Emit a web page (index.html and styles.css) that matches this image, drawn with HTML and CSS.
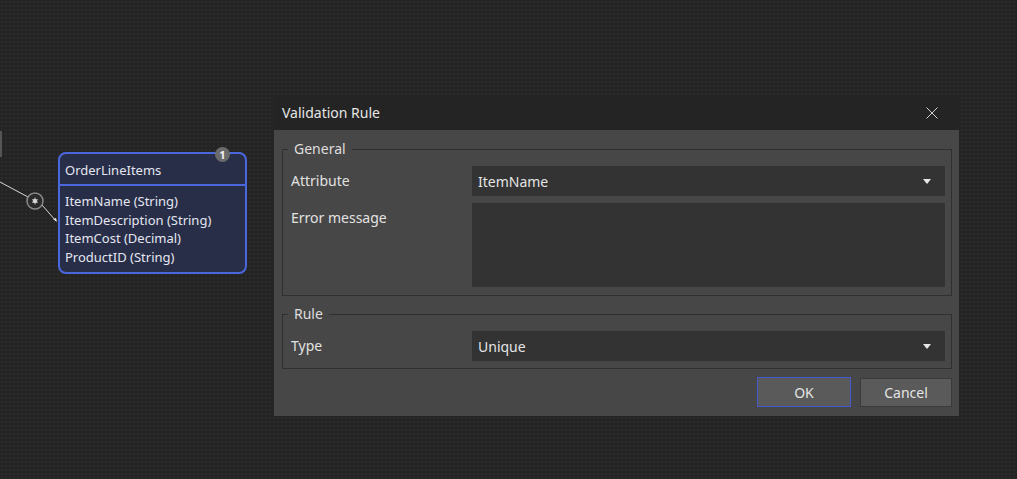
FILE: index.html
```html
<!DOCTYPE html>
<html>
<head>
<meta charset="utf-8">
<link rel="stylesheet" href="styles.css">
</head>
<body>
<div class="canvas">
  <div class="edge-mark"></div>
  <svg class="connector" width="60" height="100" viewBox="0 0 60 100">
    <line x1="0" y1="52" x2="28" y2="67" stroke="#d8d8d8" stroke-width="1"/>
    <line x1="42" y1="75" x2="56" y2="91" stroke="#d8d8d8" stroke-width="1"/>
    <circle cx="35" cy="71" r="8" fill="#2a2a2a" stroke="#8a8a8a" stroke-width="1.5"/>
    <circle cx="35" cy="71" r="2.2" fill="#e0e0e0"/>
    <path d="M35 67.5v7M32 69.5l6 3M38 69.5l-6 3" stroke="#cfcfcf" stroke-width="0.8"/>
    <path d="M53 89l4 3l-1 -4z" fill="#e0e0e0"/>
  </svg>

  <div class="entity">
    <div class="entity-badge">1</div>
    <div class="entity-head">OrderLineItems</div>
    <ul class="entity-attrs">
      <li>ItemName (String)</li>
      <li>ItemDescription (String)</li>
      <li>ItemCost (Decimal)</li>
      <li>ProductID (String)</li>
    </ul>
  </div>

  <div class="dialog">
    <div class="titlebar">
      <span class="title">Validation Rule</span>
      <svg class="close" width="12" height="12" viewBox="0 0 12 12">
        <path d="M0.5 0.5L11.5 11.5M11.5 0.5L0.5 11.5" stroke="#cfcfcf" stroke-width="1"/>
      </svg>
    </div>
    <div class="dialog-body">
      <fieldset class="group">
        <legend class="legend">General</legend>
        <div class="row">
          <span class="label">Attribute</span>
          <div class="combo"><span>ItemName</span><span class="arrow"></span></div>
        </div>
        <div class="row">
          <span class="label">Error message</span>
          <div class="textarea"></div>
        </div>
      </fieldset>
      <fieldset class="group group-rule">
        <legend class="legend">Rule</legend>
        <div class="row">
          <span class="label">Type</span>
          <div class="combo"><span>Unique</span><span class="arrow"></span></div>
        </div>
      </fieldset>
      <div class="buttons">
        <div class="btn btn-ok">OK</div>
        <div class="btn btn-cancel">Cancel</div>
      </div>
    </div>
  </div>
</div>
</body>
</html>
```
FILE: styles.css
```css
* { box-sizing: border-box; }
html, body {
  margin: 0;
  padding: 0;
  width: 1017px;
  height: 479px;
  overflow: hidden;
}
body {
  background: #242424;
  font-family: "Noto Sans", "DejaVu Sans", sans-serif;
  color: #e2e2e2;
}
.canvas {
  position: relative;
  width: 1017px;
  height: 479px;
  background-color: #242424;
  background-image: radial-gradient(circle, #2c2c2c 0.7px, transparent 0.9px);
  background-size: 4px 4px;
}
.edge-mark {
  position: absolute;
  left: 0;
  top: 131px;
  width: 2px;
  height: 26px;
  background: #555555;
}
.connector {
  position: absolute;
  left: 0;
  top: 130px;
}

/* entity node */
.entity {
  position: absolute;
  left: 58px;
  top: 152px;
  width: 189px;
  height: 122px;
  border: 2px solid #4a67dc;
  border-radius: 8px;
  background: #292e48;
  font-size: 13px;
  color: #e3e6f0;
}
.entity-badge {
  position: absolute;
  left: 155px;
  top: -7px;
  width: 15px;
  height: 15px;
  border-radius: 50%;
  background: #6b6b6b;
  color: #f2f2f2;
  font-size: 11px;
  font-weight: bold;
  line-height: 15px;
  text-align: center;
}
.entity-head {
  height: 32px;
  line-height: 32px;
  padding-left: 5px;
  border-bottom: 2px solid #4a67dc;
}
.entity-attrs {
  list-style: none;
  margin: 0;
  padding: 6px 0 0 5px;
}
.entity-attrs li {
  line-height: 18.7px;
}

/* dialog */
.dialog {
  position: absolute;
  left: 274px;
  top: 95px;
  width: 685px;
}
.titlebar {
  height: 35px;
  display: flex;
  align-items: center;
  justify-content: space-between;
  padding: 0 21px 0 8px;
  background: #242424;
}
.title {
  font-size: 14px;
  color: #e6e6e6;
}
.dialog-body {
  background: #474747;
  height: 286px;
  padding: 11px 7px 0 8px;
  font-size: 14px;
}
.group {
  margin: 0;
  border: 1px solid #303030;
  padding: 9px 6px 8px 8px;
  min-width: 0;
}
.group-rule {
  margin-top: 10px;
  padding-top: 9px;
  padding-bottom: 7px;
}
.legend {
  margin-left: -3px;
  padding: 0 6px;
  line-height: 16px;
  color: #dedede;
}
.row {
  display: flex;
  align-items: flex-start;
}
.row + .row {
  margin-top: 7px;
}
.label {
  width: 181px;
  line-height: 30px;
  color: #e2e2e2;
}
.combo {
  flex: 1;
  height: 30px;
  background: #333333;
  display: flex;
  align-items: center;
  justify-content: space-between;
  padding: 0 14px 0 6px;
  color: #e4e4e4;
}
.arrow {
  width: 0;
  height: 0;
  border-left: 4px solid transparent;
  border-right: 4px solid transparent;
  border-top: 5px solid #e8e8e8;
}
.textarea {
  flex: 1;
  height: 84px;
  background: #333333;
}
.buttons {
  display: flex;
  justify-content: flex-end;
  align-items: flex-start;
  gap: 9px;
  margin-top: 8px;
}
.btn {
  height: 30px;
  display: flex;
  align-items: center;
  justify-content: center;
  background: #5a5a5a;
  color: #e4e4e4;
  font-size: 14px;
}
.btn-ok {
  width: 94px;
  border: 1px solid #4459cc;
}
.btn-cancel {
  width: 92px;
  height: 29px;
  margin-top: 1px;
  border: 1px solid #3a3a3a;
}
```
